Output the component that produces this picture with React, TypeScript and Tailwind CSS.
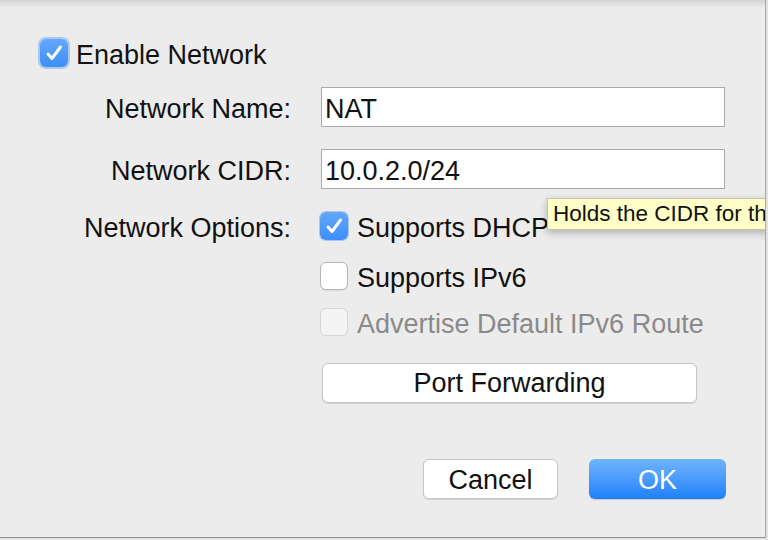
import React from "react";

function Check({ checked, disabled, focus }: { checked?: boolean; disabled?: boolean; focus?: boolean }) {
  if (checked) {
    return (
      <div
        className={
          "w-[28px] h-[28px] rounded-[6px] bg-gradient-to-b from-[#62a8fb] to-[#3d8ef7] flex items-center justify-center shrink-0 " +
          (focus ? "shadow-[0_0_0_2px_rgba(120,170,240,0.55)]" : "shadow-[0_0_0_1px_rgba(60,130,230,0.35)]")
        }
      >
        <svg width="28" height="28" viewBox="0 0 28 28">
          <path d="M8 15 L12 19.5 L20.5 8" fill="none" stroke="#ffffff" strokeWidth="3" strokeLinecap="round" strokeLinejoin="round" />
        </svg>
      </div>
    );
  }
  return (
    <div
      className={
        "w-[28px] h-[28px] rounded-[6px] shrink-0 border " +
        (disabled
          ? "bg-[#f4f4f4] border-[#d6d6d6]"
          : "bg-white border-[#b5b5b5] shadow-[0_1px_1px_rgba(0,0,0,0.08)]")
      }
    />
  );
}

export default function App() {
  return (
    <div
      className="w-[768px] h-[540px] bg-[#e2e2e2] relative overflow-hidden text-[27px] text-[#111]"
      style={{ fontFamily: '"Liberation Sans", Arial, sans-serif' }}
    >
      <div className="w-[766px] h-[538px] bg-[#ececec] border-r border-b border-r-[#a8a8a8] border-b-[#8e8e8e] relative overflow-hidden">
        <div className="h-[8px] bg-gradient-to-b from-[#d3d3d3] to-[#ececec]" />
        <div className="pl-[40px] pt-[31px]">
          <div className="flex items-center h-[28px] gap-[8px]">
            <Check checked focus />
            <span className="leading-none pt-[4px]">Enable Network</span>
          </div>
          <div className="grid grid-cols-[251px_404px] gap-x-[30px] mt-[20px]">
            <div className="flex items-center justify-end h-[40px] pt-[4px]">Network Name:</div>
            <div className="h-[40px] bg-white border border-[#ababab] flex items-center pl-[3px] pt-[4px]">NAT</div>

            <div className="flex items-center justify-end h-[40px] mt-[22px] pt-[4px]">Network CIDR:</div>
            <div className="h-[40px] bg-white border border-[#ababab] flex items-center pl-[3px] mt-[22px] pt-[4px]">10.0.2.0/24</div>

            <div className="flex items-start justify-end mt-[23px]">
              <div className="h-[28px] flex items-center pt-[4px]">Network Options:</div>
            </div>
            <div className="mt-[23px] -ml-px flex flex-col">
              <div className="flex items-center h-[28px] gap-[9px]">
                <Check checked />
                <span className="pt-[4px]">Supports DHCP</span>
              </div>
              <div className="flex items-center h-[28px] gap-[9px] mt-[22px]">
                <Check />
                <span className="pt-[4px]">Supports IPv6</span>
              </div>
              <div className="flex items-center h-[28px] gap-[9px] mt-[18px]">
                <Check disabled />
                <span className="text-[#8a8a8a] pt-[4px]">Advertise Default IPv6 Route</span>
              </div>
              <div className="ml-[2px] mt-[27px] w-[375px] h-[40px] bg-white rounded-[6px] border border-[#c6c6c6] shadow-[0_1px_1px_rgba(0,0,0,0.12)] flex items-center justify-center">
                Port Forwarding
              </div>
              <div className="flex justify-end gap-[31px] mt-[56px] mr-[-1px]">
                <div className="w-[135px] h-[40px] bg-white rounded-[6px] border border-[#c6c6c6] shadow-[0_1px_1px_rgba(0,0,0,0.12)] flex items-center justify-center pt-[2px]">
                  Cancel
                </div>
                <div className="w-[137px] h-[40px] rounded-[6px] bg-gradient-to-b from-[#6fb4fb] to-[#1b80fa] text-white shadow-[0_1px_1px_rgba(0,0,0,0.15)] flex items-center justify-center pt-[2px]">
                  OK
                </div>
              </div>
            </div>
          </div>
        </div>
        <div className="absolute left-[547px] top-[198px] h-[32px] w-[260px] bg-[#ffffc7] border border-[#c4c4a8] shadow-[0_3px_8px_rgba(0,0,0,0.25)] flex items-center pl-[5px] text-[22.5px] whitespace-nowrap">
          Holds the CIDR for the network
        </div>
      </div>
    </div>
  );
}
